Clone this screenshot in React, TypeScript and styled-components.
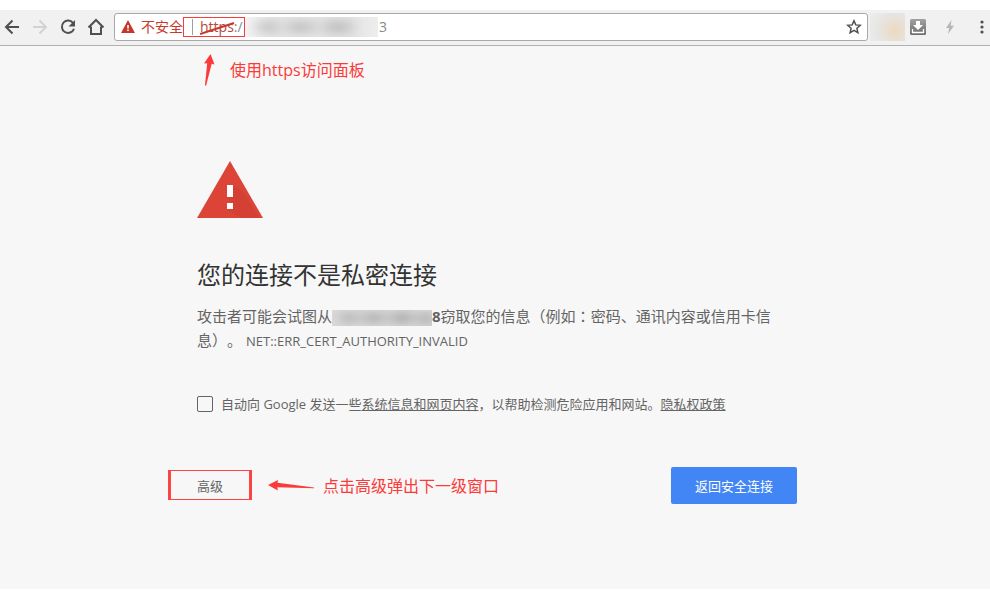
import React from "react";
import styled, { createGlobalStyle } from "styled-components";

const GlobalStyle = createGlobalStyle`
  *, *::before, *::after { box-sizing: border-box; }
  body {
    margin: 0;
    background: #fff;
    font-family: "Open Sans", "Noto Sans CJK SC", sans-serif;
    color: #646464;
    text-spacing-trim: space-all;
  }
  button, input { font: inherit; color: inherit; }
`;

const Window = styled.div`
  padding: 10px 0 13px;
`;

const Toolbar = styled.header`
  display: flex;
  align-items: center;
  height: 36px;
  padding-bottom: 2px;
  background: #f1f1f1;
  border-bottom: 1px solid #b0b0b0;
`;

const NavGroup = styled.nav`
  display: flex;
  gap: 4px;
  margin-right: 6px;
`;

const IconButton = styled.button<{ $narrow?: boolean }>`
  display: flex;
  align-items: center;
  justify-content: center;
  flex: none;
  width: ${(p) => (p.$narrow ? 16 : 24)}px;
  height: 24px;
  padding: 0;
  border: 0;
  background: none;
  svg { display: block; flex: none; }
`;

const Omnibox = styled.div`
  display: flex;
  align-items: center;
  flex: 1;
  min-width: 0;
  height: 28px;
  padding: 0 1px 0 6px;
  border: 1px solid #a9a9a9;
  border-radius: 3px;
  background: #fff;
  font-size: 14px;
  line-height: 18px;
  color: #888;
`;

const SecurityState = styled.span`
  display: flex;
  align-items: center;
  gap: 6px;
  flex: none;
  color: #c5392b;
`;

const SchemeBox = styled.span`
  display: flex;
  align-items: center;
  flex: none;
  width: 62px;
  height: 20px;
  padding-left: 8px;
  border: 1px solid #fb3a3a;
  white-space: nowrap;
`;

const Divider = styled.span`
  width: 1px;
  height: 16px;
  margin-right: 7px;
  background: #a0a0a0;
`;

const Scheme = styled.span`
  position: relative;
  color: #b8473d;
  svg { position: absolute; left: 0; top: 2px; }
`;

const Redacted = styled.span<{ $width: number; $height: number; $tone: "light" | "dark" }>`
  display: inline-block;
  flex: none;
  width: ${(p) => p.$width}px;
  height: ${(p) => p.$height}px;
  overflow: hidden;
  vertical-align: middle;
  background: ${(p) => (p.$tone === "dark" ? "#d9d9d9" : "linear-gradient(90deg, #f4f4f4, #e4e4e4 20%, #e4e4e4 80%, #ededed)")};
  svg { display: block; }
`;

const AddressInput = styled.input`
  flex: 1;
  min-width: 0;
  padding: 0 0 0 1px;
  border: 0;
  outline: 0;
  background: none;
`;

const Extensions = styled.div`
  display: flex;
  align-items: center;
  gap: 8px;
  margin-left: 2px;
`;

const BlurredExtension = styled.span`
  width: 35px;
  height: 28px;
  margin-right: -7px;
  background: radial-gradient(circle at 72% 62%, #ecd9c1 0, #e9dfd3 30%, #e6e6e5 60%, #ededed 100%);
`;

const MenuSlot = styled.div`
  margin-left: 4px;
`;

const Page = styled.main`
  padding: 7px 0 85px 4px;
  background: #f7f7f7;
`;

const Column = styled.div`
  width: 100%;
  max-width: 600px;
  margin: 0 auto;
`;

const Note = styled.p<{ $gap: number }>`
  display: flex;
  align-items: center;
  gap: ${(p) => p.$gap}px;
  margin: 0;
  font-size: 16px;
  line-height: 24px;
  color: #fb3a3a;
  svg { display: block; flex: none; }
`;

const TopNote = styled(Note)`
  padding-left: 7px;
  margin-bottom: 74px;
`;

const WarningIcon = styled.svg`
  display: block;
`;

const Title = styled.h1`
  margin: 39px 0 0;
  font-size: 24px;
  font-weight: 400;
  line-height: 36px;
  color: #333;
`;

const Message = styled.p`
  margin: 11px 0 0;
  font-size: 15px;
  line-height: 24px;
`;

const ErrorCode = styled.span`
  margin-left: 4px;
  font-size: 13px;
`;

const Centered = styled.span`
  font-family: "Noto Sans CJK TC", sans-serif;
`;

const OptIn = styled.div`
  display: flex;
  align-items: center;
  gap: 8px;
  margin-top: 41px;
  font-size: 13px;
  line-height: 20px;
`;

const Checkbox = styled.input`
  appearance: none;
  flex: none;
  width: 16px;
  height: 16px;
  margin: 0;
  border: 1px solid #646464;
  border-radius: 2px;
  &:checked { background: #646464; }
`;

const TextLink = styled.a`
  color: inherit;
  text-decoration: underline;
`;

const Actions = styled.div`
  display: flex;
  align-items: center;
  margin-top: 53px;
`;

const AdvancedButton = styled.button`
  position: relative;
  padding: 0;
  border: 0;
  background: none;
  font-size: 13px;
  line-height: 18px;
  white-space: nowrap;
  &::after {
    content: "";
    position: absolute;
    inset: -7px -29px -5px;
    border: solid #fb4444;
    border-width: 1px 3px;
  }
`;

const ActionNote = styled(Note)`
  margin-left: 45px;
`;

const PrimaryButton = styled.button`
  margin-left: auto;
  padding: 0 24px;
  height: 37px;
  border: 0;
  border-radius: 2px;
  background: #4285f4;
  color: #fff;
  font-size: 13px;
  white-space: nowrap;
`;

function Smudge({ width, height, dark }: { width: number; height: number; dark?: boolean }) {
  const id = dark ? "smudge-dark" : "smudge-light";
  const tone = dark ? "#a6a6a6" : "#c0c0c0";
  return (
    <Redacted $width={width} $height={height} $tone={dark ? "dark" : "light"} aria-hidden="true">
      <svg width={width} height={height}>
        <filter id={id} x="-30%" y="-150%" width="160%" height="400%">
          <feGaussianBlur stdDeviation="7 5" />
        </filter>
        <g filter={`url(#${id})`} fill={tone}>
          <rect x={width * 0.1} y={height * 0.25} width={width * 0.14} height={height * 0.5} />
          <rect x={width * 0.32} y={height * 0.25} width={width * 0.2} height={height * 0.5} />
          <rect x={width * 0.6} y={height * 0.2} width={width * 0.2} height={height * 0.6} />
          {dark && <rect x={width * 0.88} y={height * 0.2} width={width * 0.12} height={height * 0.7} />}
        </g>
      </svg>
    </Redacted>
  );
}

export default function App() {
  return (
    <>
      <GlobalStyle />
      <Window>
        <Toolbar>
          <NavGroup>
            <IconButton aria-label="后退">
              <svg width="16" height="16" viewBox="0 0 16 16" fill="none" stroke="#505050" strokeWidth="2">
                <path d="M15 8H2.5M8.5 1.5L2 8l6.5 6.5" />
              </svg>
            </IconButton>
            <IconButton aria-label="前进">
              <svg width="16" height="16" viewBox="0 0 16 16" fill="none" stroke="#d2d2d2" strokeWidth="2">
                <path d="M1 8h12.500M7.500 1.500L14 8l-6.500 6.500" />
              </svg>
            </IconButton>
            <IconButton aria-label="重新加载">
              <svg width="16" height="16" viewBox="0 0 16 16">
                <path d="M13.300 4.300A6.200 6.200 0 1 0 14 9.700" fill="none" stroke="#505050" strokeWidth="2" />
                <path d="M15 1v6.500H8.500z" fill="#505050" />
              </svg>
            </IconButton>
            <IconButton aria-label="主页">
              <svg width="18" height="18" viewBox="0 0 18 18" fill="none" stroke="#505050" strokeWidth="2">
                <path d="M1.500 9.500L9 2l7.500 7.500M4 8.500V16h10V8.500" />
              </svg>
            </IconButton>
          </NavGroup>

          <Omnibox>
            <SecurityState>
              <svg width="14" height="13" viewBox="0 0 14 13">
                <path d="M7 0l7 13H0z" fill="#c5392b" />
                <path d="M6.200 5h1.600v3.500H6.200zM6.200 9.500h1.600v1.600H6.200z" fill="#fff" />
              </svg>
              不安全
            </SecurityState>
            <SchemeBox>
              <Divider />
              <Scheme>
                https
                <svg width="35" height="16" viewBox="0 0 35 16" aria-hidden="true">
                  <path d="M0 14L34 3" stroke="#c5392b" strokeWidth="2" />
                </svg>
              </Scheme>
              :/
            </SchemeBox>
            <Smudge width={133} height={20} />
            <AddressInput aria-label="地址" defaultValue="3" />
            <IconButton aria-label="收藏">
              <svg width="16" height="16" viewBox="0 0 16 16">
                <path
                  d="M8 1.800l1.800 4.100 4.500.4-3.400 3 1 4.400L8 11.400l-3.900 2.300 1-4.400-3.400-3 4.500-.4z"
                  fill="none"
                  stroke="#505050"
                  strokeWidth="1.500"
                />
              </svg>
            </IconButton>
          </Omnibox>

          <Extensions>
            <BlurredExtension />
            <IconButton aria-label="下载">
              <svg width="16" height="16" viewBox="0 0 16 16">
                <defs>
                  <linearGradient id="tray" x1="0" y1="0" x2="0" y2="1">
                    <stop offset="0" stopColor="#a2a2a2" />
                    <stop offset="1" stopColor="#6c6c6c" />
                  </linearGradient>
                </defs>
                <rect width="16" height="16" rx="1.500" fill="url(#tray)" />
                <path d="M6 2h4v4h3L8 11 3 6h3z" fill="#fff" />
                <path d="M2.500 10v3.500h11V10" fill="none" stroke="#fff" strokeWidth="1.300" />
              </svg>
            </IconButton>
            <IconButton aria-label="闪电">
              <svg width="10" height="14" viewBox="0 0 10 14">
                <path d="M6.500 0L1 8h3.200L3 14l6-8.300H5.600z" fill="#b5b5b5" />
              </svg>
            </IconButton>
            <MenuSlot>
              <IconButton $narrow aria-label="菜单">
                <svg width="4" height="14" viewBox="0 0 4 14" fill="#505050">
                  <circle cx="2" cy="2" r="1.600" />
                  <circle cx="2" cy="7" r="1.600" />
                  <circle cx="2" cy="12" r="1.600" />
                </svg>
              </IconButton>
            </MenuSlot>
          </Extensions>
        </Toolbar>

        <Page>
          <Column>
            <TopNote $gap={14}>
              <svg width="12" height="34" viewBox="0 0 12 34" fill="#fb3a3a" aria-hidden="true">
                <path d="M6.500 1L10.500 11.500 7.700 10.700 2 33 1 32 3.200 10.200 0 10.500z" />
              </svg>
              使用https访问面板
            </TopNote>

            <WarningIcon width="66" height="57" viewBox="0 0 66 57" role="img" aria-label="警告">
              <path d="M33 0l33 57H0z" fill="#db4437" />
              <path d="M36 24l10 7 14 22 2 4H44L30 48l6-6-6-6z" fill="#b93428" opacity=".22" />
              <path d="M30 24h6v12h-6zM30 42h6v6h-6z" fill="#fff" />
            </WarningIcon>

            <Title>您的连接不是私密连接</Title>
            <Message>
              攻击者可能会试图从
              <Smudge width={100} height={16} dark />
              <b>8</b>窃取您的信息（例如<Centered>：</Centered>密码、通讯内容或信用卡信息）。
              <ErrorCode>NET::ERR_CERT_AUTHORITY_INVALID</ErrorCode>
            </Message>

            <OptIn>
              <Checkbox type="checkbox" id="report" />
              <label htmlFor="report">
                自动向 Google 发送一些<TextLink href="#data">系统信息和网页内容</TextLink>，以帮助检测危险应用和网站。
                <TextLink href="#privacy">隐私权政策</TextLink>
              </label>
            </OptIn>

            <Actions>
              <AdvancedButton>高级</AdvancedButton>
              <ActionNote $gap={9}>
                <svg width="46" height="11" viewBox="0 0 46 11" fill="#fb3a3a" aria-hidden="true">
                  <path d="M0 5L10 0 9.500 2.800 46 7.600V8.200L9.300 7.300 9.800 10.500z" />
                </svg>
                点击高级弹出下一级窗口
              </ActionNote>
              <PrimaryButton>返回安全连接</PrimaryButton>
            </Actions>
          </Column>
        </Page>
      </Window>
    </>
  );
}
